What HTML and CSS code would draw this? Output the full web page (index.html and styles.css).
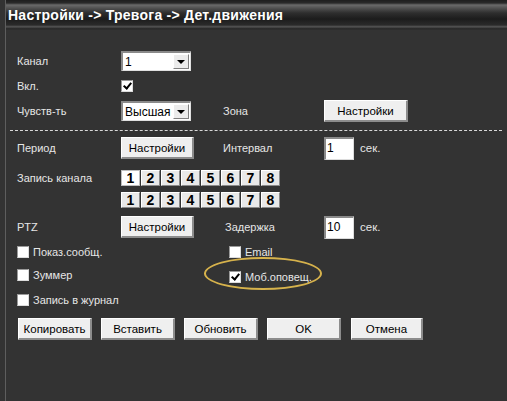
FILE: index.html
```html
<!DOCTYPE html>
<html>
<head>
<meta charset="utf-8">
<link rel="stylesheet" href="styles.css">
</head>
<body>
<div class="win">
  <div class="title">Настройки -&gt; Тревога -&gt; Дет.движения</div>
  <div class="content">
    <div class="row r1">
      <span class="lbl">Канал</span>
      <div class="select w70"><span class="val">1</span><span class="arrow"></span></div>
    </div>
    <div class="row r2">
      <span class="lbl">Вкл.</span>
      <span class="cb checked"></span>
    </div>
    <div class="row r3">
      <span class="lbl">Чувств-ть</span>
      <div class="select w70"><span class="val">Высшая</span><span class="arrow"></span></div>
      <span class="lbl">Зона</span>
      <button class="btn wide">Настройки</button>
    </div>
    <div class="sep"></div>
    <div class="row r5">
      <span class="lbl">Период</span>
      <button class="btn mid">Настройки</button>
      <span class="lbl">Интервал</span>
      <div class="numin"><span class="inp">1</span><span class="lbl unit">сек.</span></div>
    </div>
    <div class="row r6">
      <span class="lbl">Запись канала</span>
      <div class="chans">
        <span class="ch sel">1</span><span class="ch">2</span><span class="ch">3</span><span class="ch">4</span><span class="ch">5</span><span class="ch">6</span><span class="ch">7</span><span class="ch">8</span>
      </div>
    </div>
    <div class="row r7">
      <span></span>
      <div class="chans">
        <span class="ch">1</span><span class="ch">2</span><span class="ch">3</span><span class="ch">4</span><span class="ch">5</span><span class="ch">6</span><span class="ch">7</span><span class="ch">8</span>
      </div>
    </div>
    <div class="row r8">
      <span class="lbl">PTZ</span>
      <button class="btn mid">Настройки</button>
      <span class="lbl zad">Задержка</span>
      <div class="numin"><span class="inp">10</span><span class="lbl unit">сек.</span></div>
    </div>
    <div class="crow r9">
      <label class="citem"><span class="cb"></span><span class="lbl">Показ.сообщ.</span></label>
      <label class="citem"><span class="cb"></span><span class="lbl">Email</span></label>
    </div>
    <div class="crow r10">
      <label class="citem"><span class="cb"></span><span class="lbl">Зуммер</span></label>
      <label class="citem mob"><span class="cb checked"></span><span class="lbl">Моб.оповещ.</span><span class="ring"></span></label>
    </div>
    <div class="crow r11">
      <label class="citem"><span class="cb"></span><span class="lbl">Запись в журнал</span></label>
    </div>
    <div class="actions">
      <button class="btn act">Копировать</button>
      <button class="btn act">Вставить</button>
      <button class="btn act">Обновить</button>
      <button class="btn act">OK</button>
      <button class="btn act last">Отмена</button>
    </div>
  </div>
</div>
</body>
</html>
```

FILE: styles.css
```css
html, body {
  margin: 0;
  padding: 0;
  background: #333333;
  height: 100%;
}
body {
  font-family: "Liberation Sans", Arial, sans-serif;
  font-size: 11px;
  color: #e6e6e6;
  overflow: hidden;
}
.win {
  margin-left: 5px;
  border-left: 1px solid #5e5e5e;
  height: 401px;
  box-sizing: border-box;
  background: #333333;
}
.title {
  height: 30px;
  box-sizing: border-box;
  background: linear-gradient(to bottom,
    #1e1e1e 0px, #2a2a2a 3px, #6a6a6a 5px, #4a4a4a 9px, #2e2e2e 13px,
    #1c1c1c 19px, #2a2a2a 25px, #5a5a5a 27px, #2b2b2b 28px, #2e2e2e 30px);
  color: #ffffff;
  font-weight: bold;
  font-size: 14px;
  line-height: 30px;
  padding-left: 2px;
  letter-spacing: 0.25px;
}
.content {
  padding: 20px 0 0 11px;
}
.row {
  display: grid;
  grid-template-columns: 104px 102px 101px auto;
  align-items: center;
}
.r1 { height: 22px; }
.r2 { height: 28px; }
.r3 { height: 16px; }
.r5 { height: 34px; }
.r6 { height: 26px; }
.r7 { height: 18px; }
.r8 { height: 36px; }
.r9 { height: 12px; }
.r10 { height: 36px; }
.r11 { height: 12px; }
.lbl {
  white-space: nowrap;
  line-height: 14px;
}
.zad { margin-left: 2px; }
.sep {
  margin: 14px 5px 0 -7px;
  border-top: 1px dashed #d8d8d8;
  height: 0;
}
.select {
  position: relative;
  height: 20px;
  box-sizing: border-box;
  background: #ffffff;
  border-top: 2px solid #8a8a8a;
  border-left: 2px solid #8a8a8a;
  border-right: 1px solid #e0e0e0;
  border-bottom: 1px solid #e0e0e0;
  display: flex;
  align-items: center;
  color: #000;
  font-size: 12px;
}
.w70 { width: 70px; }
.select .val { flex: 1; padding-left: 2px; overflow: hidden; white-space: nowrap; }
.select .arrow {
  width: 16px;
  height: 15px;
  margin-right: 1px;
  box-sizing: border-box;
  background: #ececec;
  border-top: 1px solid #ffffff;
  border-left: 1px solid #ffffff;
  border-right: 1px solid #808080;
  border-bottom: 1px solid #808080;
  display: flex;
  align-items: center;
  justify-content: center;
  flex: none;
}
.select .arrow::after {
  content: "";
  border-left: 4px solid transparent;
  border-right: 4px solid transparent;
  border-top: 4px solid #000;
}
.cb {
  width: 12px;
  height: 12px;
  box-sizing: border-box;
  background: #ffffff;
  border-top: 1px solid #9a9a9a;
  border-left: 1px solid #9a9a9a;
  border-right: 1px solid #dcdcdc;
  border-bottom: 1px solid #dcdcdc;
  display: inline-block;
  position: relative;
  flex: none;
}
.cb.checked::after {
  content: "";
  position: absolute;
  left: 3px;
  top: 0px;
  width: 3px;
  height: 6px;
  border-right: 2px solid #000;
  border-bottom: 2px solid #000;
  transform: rotate(40deg);
}
.btn {
  font-family: "Liberation Sans", Arial, sans-serif;
  font-size: 11.5px;
  color: #000;
  background: #efefef;
  border-top: 1px solid #ffffff;
  border-left: 1px solid #ffffff;
  border-right: 2px solid #8c8c8c;
  border-bottom: 2px solid #8c8c8c;
  height: 22px;
  padding: 0;
  margin: 0;
  box-sizing: border-box;
  line-height: 18px;
}
.wide { width: 84px; }
.mid { width: 73px; }
.numin {
  display: flex;
  align-items: center;
  gap: 6px;
}
.inp {
  width: 30px;
  height: 23px;
  box-sizing: border-box;
  background: #fff;
  border-top: 2px solid #8a8a8a;
  border-left: 2px solid #8a8a8a;
  border-right: 1px solid #dcdcdc;
  border-bottom: 1px solid #dcdcdc;
  color: #000;
  font-size: 12px;
  line-height: 18px;
  padding-left: 1px;
}
.unit { font-size: 11.5px; }
.chans {
  display: flex;
  gap: 1px;
  grid-column: 2 / span 2;
}
.ch {
  width: 19px;
  height: 16px;
  box-sizing: border-box;
  background: #e9e9e9;
  border-top: 1px solid #ffffff;
  border-left: 1px solid #ffffff;
  border-right: 1px solid #8a8a8a;
  border-bottom: 1px solid #8a8a8a;
  color: #000;
  font-weight: bold;
  font-size: 14px;
  line-height: 14px;
  text-align: center;
}
.ch.sel {
  background: #ffffff;
  border-color: #bdbdbd;
}
.crow {
  display: grid;
  grid-template-columns: 212px auto;
  align-items: center;
}
.citem {
  display: flex;
  align-items: center;
  gap: 4px;
  position: relative;
}
.r10 .mob { top: 2px; }
.ring {
  position: absolute;
  left: -25px;
  top: -13px;
  width: 118px;
  height: 33px;
  border: 2px solid #d6b24c;
  border-radius: 50%;
  box-sizing: border-box;
  pointer-events: none;
}
.actions {
  display: flex;
  gap: 9px;
  margin-top: 13px;
  padding-left: 1px;
}
.act { width: 74px; }
.act.last { width: 72px; margin-left: 1px; }
```
